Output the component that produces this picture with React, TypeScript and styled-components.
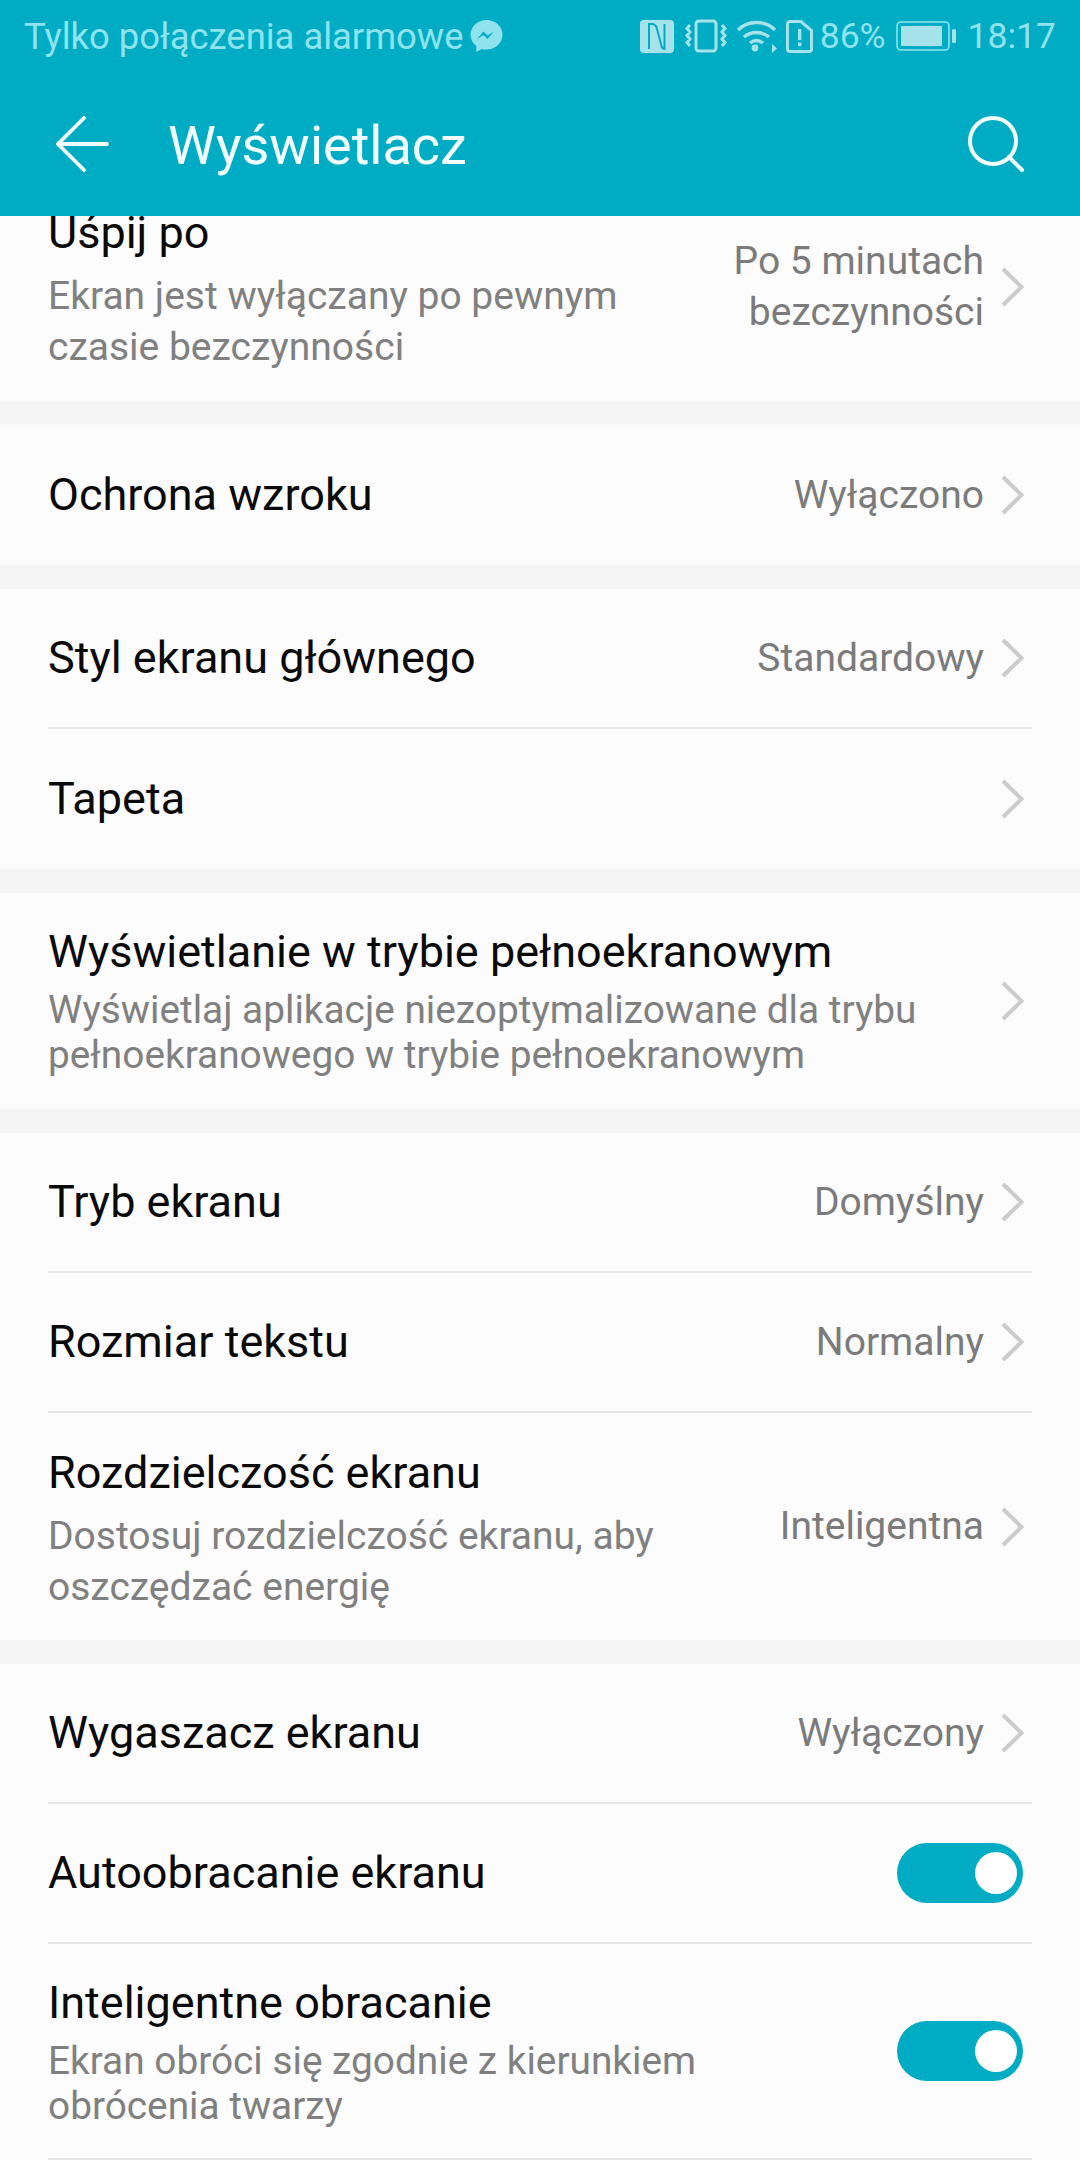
import styled, { createGlobalStyle } from 'styled-components';

const GlobalStyle = createGlobalStyle`
  html, body {
    margin: 0;
    padding: 0;
    background: #f5f5f5;
    font-family: Roboto, "Noto Sans", sans-serif;
    overflow: hidden;
  }
`;

const Screen = styled.div`
  width: 1080px;
  height: 2160px;
  display: flex;
  flex-direction: column;
  overflow: hidden;
`;

const Header = styled.header`
  height: 216px;
  flex: none;
  background: #00acc4;
  display: flex;
  flex-direction: column;
`;

const StatusBar = styled.div`
  height: 72px;
  padding: 0 24px;
  display: flex;
  align-items: center;
  color: #8fe3ee;
  font-size: 35.5px;
`;

const Carrier = styled.span`
  font-size: 36.4px;
  margin-right: 6px;
`;

const StatusRight = styled.div`
  margin-left: auto;
  display: flex;
  align-items: center;
`;

const StatusIcon = styled.svg<{ $gap?: number }>`
  display: block;
  margin-right: ${p => p.$gap ?? 10}px;
`;

const Percent = styled.span`
  margin-right: 10px;
`;

const ActionBar = styled.div`
  flex: 1;
  display: flex;
  align-items: center;
  padding: 0 56px;
  color: #f2feff;
`;

const BackArrow = styled.svg`
  display: block;
  flex: none;
`;

const Title = styled.h1`
  margin: 3px 0 0 59px;
  font-size: 54px;
  font-weight: 400;
  line-height: 1;
  color: #f2feff;
`;

const SearchButton = styled.svg`
  display: block;
  margin-left: auto;
`;

const List = styled.main`
  flex: 1;
  min-height: 0;
  overflow: hidden;
  display: flex;
  flex-direction: column;
  gap: 24px;
`;

const Section = styled.section<{ $offset?: number }>`
  flex: none;
  background: #fcfcfc;
  padding: 0 48px;
  margin-top: ${p => p.$offset ?? 0}px;
`;

const Row = styled.div<{ $last?: boolean }>`
  display: flex;
  align-items: center;
  padding-right: 8px;
  box-sizing: border-box;
  min-height: 140px;
  border-bottom: ${p => (p.$last ? 'none' : '2px solid #e6e6e6')};
`;

const RowText = styled.div<{ $tight?: boolean; $bottom?: number }>`
  flex: 1;
  min-width: 0;
  padding-top: ${p => (p.$tight ? 34 : 35)}px;
  padding-bottom: ${p => p.$bottom ?? (p.$tight ? 32 : 28)}px;
`;

const RowTitle = styled.div`
  flex: 1;
  font-size: 45px;
  line-height: 50px;
  color: #0a0a0a;
`;

const RowSub = styled.div<{ $tight?: boolean }>`
  font-size: ${p => (p.$tight ? 38.8 : 39)}px;
  color: #808080;
  margin-top: ${p => (p.$tight ? 10 : 13)}px;
  line-height: ${p => (p.$tight ? 45 : 51)}px;
`;

const Value = styled.div`
  flex: none;
  font-size: 39px;
  line-height: 51px;
  color: #7b7b7b;
  text-align: right;
  margin-left: 24px;
`;

const Chevron = styled.svg`
  flex: none;
  display: block;
  margin-left: 16px;
`;

const Toggle = styled.div`
  flex: none;
  width: 126px;
  height: 60px;
  border-radius: 30px;
  background: #00acc4;
  display: flex;
  align-items: center;
  justify-content: flex-end;
  padding-right: 6px;
  box-sizing: border-box;
  margin-left: 24px;
  margin-right: 1px;
`;

const Knob = styled.div`
  width: 42px;
  height: 42px;
  border-radius: 50%;
  background: #fff;
`;

function Arrow() {
  return (
    <Chevron width="24" height="42" viewBox="0 0 24 42" fill="none">
      <path d="M3 3 L21.500 21 L3 39" stroke="#cccccc" strokeWidth="4" />
    </Chevron>
  );
}

function MessengerIcon() {
  return (
    <StatusIcon $gap={0} width="33" height="34" viewBox="0 0 33 34">
      <path
        fill="#8fe3ee"
        d="M16.5 1C7.6 1 .5 7.6.5 15.800c0 4.600 2.200 8.600 5.800 11.300V33l5.400-3c1.500.4 3.100.6 4.800.6 8.900 0 16-6.600 16-14.800S25.400 1 16.500 1z"
      />
      <path d="M7 20l6.500-7.500 4 4 6.500-4-6.500 7.500-4-4z" fill="#00acc4" />
    </StatusIcon>
  );
}

function StatusIcons() {
  return (
    <StatusRight>
      <StatusIcon $gap={11} width="34" height="33" viewBox="0 0 34 33">
        <rect width="34" height="33" rx="4" fill="#a5e2ea" />
        <path
          d="M9 29V4h3c2 0 3.500 1 4.500 3l5 19c.6 2 1.500 3 3 3V4"
          fill="none"
          stroke="#00acc4"
          strokeWidth="2"
        />
      </StatusIcon>
      <StatusIcon $gap={9} width="42" height="34" viewBox="0 0 42 34" fill="none" stroke="#a5e2ea">
        <rect x="11" y="2" width="20" height="30" rx="3" strokeWidth="3" />
        <path d="M5 6L2 9.500l3 3.500-3 3.500L5 20l-3 3.500L5 27M37 6l3 3.500-3 3.500 3 3.500-3 3.500 3 3.500-3 3.500" strokeWidth="3" />
      </StatusIcon>
      <StatusIcon $gap={9} width="41" height="34" viewBox="0 0 41 34" fill="none" stroke="#a5e2ea">
        <path d="M2 11c10-10 27-10 37 0" strokeWidth="3.400" />
        <path d="M8 18c7-6 18-6 25 0" strokeWidth="3.400" />
        <path d="M14 24c4-3 9-3 13 0" strokeWidth="3.400" />
        <circle cx="19" cy="29" r="3.400" fill="#a5e2ea" stroke="none" />
        <path d="M36 25l5 4.500-5 4.500z" fill="#a5e2ea" stroke="none" />
      </StatusIcon>
      <StatusIcon $gap={7} width="27" height="33" viewBox="0 0 27 33" fill="none">
        <path d="M4 1.500h11l10.500 9V29a2.500 2.500 0 0 1-2.500 2.500H4A2.500 2.500 0 0 1 1.500 29V4A2.500 2.500 0 0 1 4 1.500z" stroke="#a5e2ea" strokeWidth="3" />
        <rect x="12" y="9" width="3.400" height="11" fill="#a5e2ea" />
        <rect x="12" y="22.500" width="3.400" height="3.600" fill="#a5e2ea" />
      </StatusIcon>
      <Percent>86%</Percent>
      <StatusIcon $gap={11} width="61" height="30" viewBox="0 0 61 30">
        <rect x="1" y="1" width="52" height="28" rx="4" fill="none" stroke="#8fe3ee" strokeWidth="1.600" />
        <rect x="5" y="5" width="41" height="20" fill="#a5e2ea" />
        <rect x="56" y="8" width="4" height="14" rx="1.500" fill="#a5e2ea" />
      </StatusIcon>
      <span>18:17</span>
    </StatusRight>
  );
}

export default function App() {
  return (
    <Screen>
      <GlobalStyle />
      <Header>
        <StatusBar>
          <Carrier>Tylko połączenia alarmowe</Carrier>
          <MessengerIcon />
          <StatusIcons />
        </StatusBar>
        <ActionBar>
          <BackArrow width="53" height="56" viewBox="0 0 53 56" fill="none" stroke="#f2feff" strokeWidth="3.800" strokeLinecap="round">
            <path d="M28 2L2 28l26 26M2 28h49" />
          </BackArrow>
          <Title>Wyświetlacz</Title>
          <SearchButton width="56" height="56" viewBox="0 0 56 56" fill="none" stroke="#f2feff" strokeLinecap="round">
            <circle cx="25" cy="25" r="23" strokeWidth="4" />
            <path d="M41 41l13 13" strokeWidth="4" />
          </SearchButton>
        </ActionBar>
      </Header>
      <List>
        <Section $offset={-43}>
          <Row $last>
            <RowText>
              <RowTitle>Uśpij po</RowTitle>
              <RowSub>
                Ekran jest wyłączany po pewnym
                <br />
                czasie bezczynności
              </RowSub>
            </RowText>
            <Value>
              Po 5 minutach
              <br />
              bezczynności
            </Value>
            <Arrow />
          </Row>
        </Section>
        <Section>
          <Row $last>
            <RowTitle>Ochrona wzroku</RowTitle>
            <Value>Wyłączono</Value>
            <Arrow />
          </Row>
        </Section>
        <Section>
          <Row>
            <RowTitle>Styl ekranu głównego</RowTitle>
            <Value>Standardowy</Value>
            <Arrow />
          </Row>
          <Row $last>
            <RowTitle>Tapeta</RowTitle>
            <Arrow />
          </Row>
        </Section>
        <Section>
          <Row $last>
            <RowText $tight>
              <RowTitle>Wyświetlanie w trybie pełnoekranowym</RowTitle>
              <RowSub $tight>
                Wyświetlaj aplikacje niezoptymalizowane dla trybu
                <br />
                pełnoekranowego w trybie pełnoekranowym
              </RowSub>
            </RowText>
            <Arrow />
          </Row>
        </Section>
        <Section>
          <Row>
            <RowTitle>Tryb ekranu</RowTitle>
            <Value>Domyślny</Value>
            <Arrow />
          </Row>
          <Row>
            <RowTitle>Rozmiar tekstu</RowTitle>
            <Value>Normalny</Value>
            <Arrow />
          </Row>
          <Row $last>
            <RowText $bottom={27}>
              <RowTitle>Rozdzielczość ekranu</RowTitle>
              <RowSub>
                Dostosuj rozdzielczość ekranu, aby
                <br />
                oszczędzać energię
              </RowSub>
            </RowText>
            <Value>Inteligentna</Value>
            <Arrow />
          </Row>
        </Section>
        <Section>
          <Row>
            <RowTitle>Wygaszacz ekranu</RowTitle>
            <Value>Wyłączony</Value>
            <Arrow />
          </Row>
          <Row>
            <RowTitle>Autoobracanie ekranu</RowTitle>
            <Toggle>
              <Knob />
            </Toggle>
          </Row>
          <Row>
            <RowText $tight $bottom={30}>
              <RowTitle>Inteligentne obracanie</RowTitle>
              <RowSub $tight>
                Ekran obróci się zgodnie z kierunkiem
                <br />
                obrócenia twarzy
              </RowSub>
            </RowText>
            <Toggle>
              <Knob />
            </Toggle>
          </Row>
        </Section>
      </List>
    </Screen>
  );
}
